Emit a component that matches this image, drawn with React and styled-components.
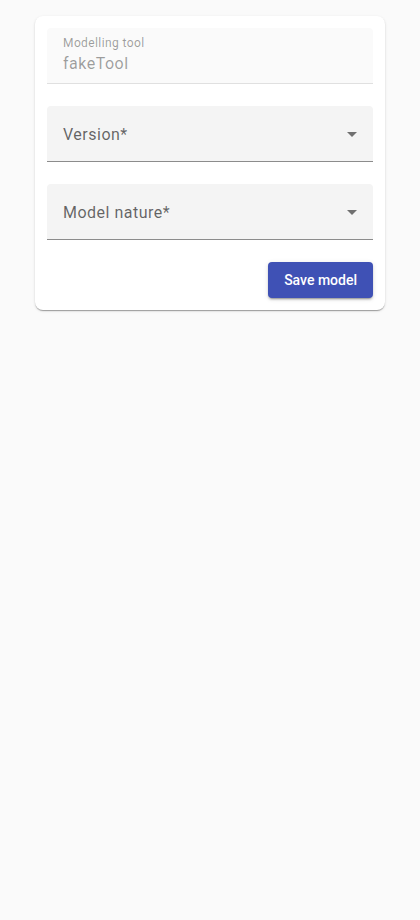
import React from "react";
import styled, { createGlobalStyle } from "styled-components";

const Global = createGlobalStyle`
  html, body { margin: 0; padding: 0; background: #fafafa; }
  body { font-family: Roboto, "Noto Sans", Arial, sans-serif; }
`;

const Page = styled.div`
  display: flex;
  justify-content: center;
  padding: 16px 35px;
  min-height: 920px;
  box-sizing: border-box;
`;

const Card = styled.form`
  width: 350px;
  height: fit-content;
  background: #fff;
  border-radius: 8px;
  box-shadow: 0px 2px 1px -1px rgba(0,0,0,0.2), 0px 1px 1px 0px rgba(0,0,0,0.14), 0px 1px 3px 0px rgba(0,0,0,0.12);
  padding: 12px;
  box-sizing: border-box;
  display: flex;
  flex-direction: column;
  gap: 22px;
`;

const Field = styled.div`
  position: relative;
  height: 56px;
  box-sizing: border-box;
  background: ${(p) => (p.$disabled ? "#fafafa" : "#f4f4f4")};
  border-radius: 4px 4px 0 0;
  border-bottom: 1px solid ${(p) => (p.$disabled ? "#e0e0e0" : "#8c8c8c")};
  padding: ${(p) => (p.$disabled ? "8px 16px 0" : "3px 16px 0")};
  display: flex;
  flex-direction: column;
  justify-content: ${(p) => (p.$disabled ? "flex-start" : "center")};
`;

const SmallLabel = styled.div`
  font-size: 12px;
  line-height: 14px;
  color: rgba(0,0,0,0.38);
  letter-spacing: 0.4px;
  margin-bottom: 3px;
`;

const Value = styled.div`
  font-size: 16px;
  line-height: 22px;
  color: rgba(0,0,0,0.38);
  letter-spacing: 0.5px;
`;

const Placeholder = styled.div`
  font-size: 16px;
  line-height: 20px;
  color: rgba(0,0,0,0.6);
  letter-spacing: 0.5px;
`;

const Arrow = styled.svg`
  position: absolute;
  right: 9px;
  top: 16px;
  width: 24px;
  height: 24px;
  fill: rgba(0,0,0,0.54);
`;

const Actions = styled.div`
  display: flex;
  justify-content: flex-end;
`;

const Button = styled.button`
  height: 36px;
  padding: 0 16px;
  border: none;
  border-radius: 4px;
  background: #3f51b5;
  color: #fff;
  font-family: Roboto, "Noto Sans", Arial, sans-serif;
  font-size: 14px;
  font-weight: 500;
  letter-spacing: 0;
  box-shadow: 0px 3px 1px -2px rgba(0,0,0,0.2), 0px 2px 2px 0px rgba(0,0,0,0.14), 0px 1px 5px 0px rgba(0,0,0,0.12);
  cursor: pointer;
`;

const DropIcon = () => (
  <Arrow viewBox="0 0 24 24">
    <path d="M7 10l5 5 5-5z" />
  </Arrow>
);

export default function App() {
  return (
    <>
      <Global />
      <Page>
        <Card onSubmit={(e) => e.preventDefault()}>
          <Field $disabled>
            <SmallLabel>Modelling tool</SmallLabel>
            <Value>fakeTool</Value>
          </Field>
          <Field>
            <Placeholder>Version*</Placeholder>
            <DropIcon />
          </Field>
          <Field>
            <Placeholder>Model nature*</Placeholder>
            <DropIcon />
          </Field>
          <Actions>
            <Button type="submit">Save model</Button>
          </Actions>
        </Card>
      </Page>
    </>
  );
}
